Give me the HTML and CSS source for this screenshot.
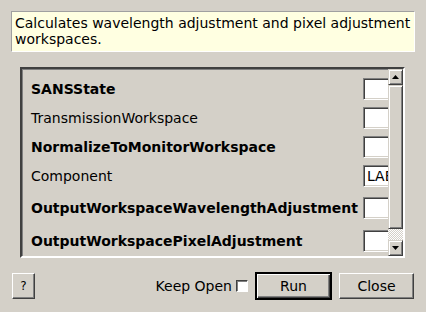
FILE: index.html
```html
<!DOCTYPE html>
<html lang="en">
<head>
  <meta charset="utf-8">
  <title>SANSCalculateTransmission</title>
  <link rel="stylesheet" href="styles.css">
</head>
<body>
  <div class="dialog">
    <div class="desc">Calculates wavelength adjustment and pixel adjustment workspaces.</div>

    <div class="panel">
      <div class="rows">
        <div class="row">
          <span class="label bold">SANSState</span>
          <input class="field" type="text">
        </div>
        <div class="row">
          <span class="label">TransmissionWorkspace</span>
          <input class="field" type="text">
        </div>
        <div class="row">
          <span class="label bold">NormalizeToMonitorWorkspace</span>
          <input class="field" type="text">
        </div>
        <div class="row row-30">
          <span class="label">Component</span>
          <input class="field" type="text" value="LAB">
        </div>
        <div class="row row-33">
          <span class="label bold">OutputWorkspaceWavelengthAdjustment</span>
          <input class="field" type="text">
        </div>
        <div class="row row-34">
          <span class="label bold">OutputWorkspacePixelAdjustment</span>
          <input class="field" type="text">
        </div>
      </div>

      <div class="scrollbar">
        <div class="sb-btn">
          <svg width="7" height="4" viewBox="0 0 7 4"><path d="M0 4h7L3.5 0z" fill="#000"/></svg>
        </div>
        <div class="sb-thumb"></div>
        <div class="sb-track"></div>
        <div class="sb-btn">
          <svg width="7" height="4" viewBox="0 0 7 4"><path d="M0 0h7L3.5 4z" fill="#000"/></svg>
        </div>
      </div>
    </div>

    <div class="actions">
      <button class="btn btn-help" type="button">?</button>
      <label class="keep-open">Keep Open <span class="check"></span></label>
      <button class="btn btn-default" type="button">Run</button>
      <button class="btn" type="button">Close</button>
    </div>
  </div>
</body>
</html>
```

FILE: styles.css
```css
body {
  margin: 0;
  background-color: #d4d0c8;
  color: #000;
  font-family: "DejaVu Sans", sans-serif;
  font-size: 14px;
}

.dialog {
  display: flex;
  flex-direction: column;
  padding: 11px 11px 0 11px;
}

.desc {
  background-color: #ffffe1;
  border: 1px solid;
  border-color: #a0a0a0 #ffffff #ffffff #a0a0a0;
  padding: 3px 3px 4px 3px;
  line-height: 16px;
}

.panel {
  display: flex;
  width: 381px;
  height: 187px;
  margin: 15px 0 0 9px;
  border: 2px solid;
  border-color: #404040 #ffffff #ffffff #404040;
  box-shadow: inset 1px 1px #808080;
}

.rows {
  flex: 1;
  overflow: hidden;
  padding: 5px 0 0 9px;
}

.row {
  display: flex;
  align-items: center;
  height: 29px;
}

.row-30 { height: 30px; }
.row-33 { height: 33px; }
.row-34 { height: 34px; }

.label {
  flex: 1;
  white-space: nowrap;
}

.bold {
  font-weight: bold;
}

.field {
  flex: none;
  box-sizing: border-box;
  width: 40px;
  height: 22px;
  margin: 0 -15px 0 0;
  padding: 0 3px;
  font: inherit;
  color: #000;
  background-color: #fff;
  border: 1px solid;
  border-color: #808080 #ffffff #ffffff #808080;
  box-shadow: inset 1px 1px #404040, inset -1px -1px #d4d0c8;
  outline: none;
}

.scrollbar {
  display: flex;
  flex-direction: column;
  width: 15px;
}

.sb-btn,
.sb-thumb {
  box-sizing: border-box;
  background-color: #d4d0c8;
  border: 1px solid;
  border-color: #d4d0c8 #404040 #404040 #d4d0c8;
  box-shadow: inset 1px 1px #ffffff, inset -1px -1px #808080;
}

.sb-btn {
  display: flex;
  align-items: center;
  justify-content: center;
  height: 16px;
}

.sb-thumb {
  height: 144px;
}

.sb-track {
  flex: 1;
  background: repeating-conic-gradient(#ffffff 0 25%, #d4d0c8 0 50%) 0 0 / 2px 2px;
}

.actions {
  display: flex;
  align-items: center;
  margin-top: 14px;
  padding-right: 1px;
}

.btn {
  box-sizing: border-box;
  height: 26px;
  width: 75px;
  font: inherit;
  color: #000;
  background-color: #d4d0c8;
  border: 1px solid;
  border-color: #ffffff #404040 #404040 #ffffff;
  box-shadow: inset -1px -1px #808080;
  padding: 0;
}

.btn-help {
  width: 23px;
  margin-left: 1px;
  font-size: 12px;
}

.btn-default {
  width: 77px;
  height: 28px;
  margin-right: 7px;
  border: 2px solid;
  border-color: #000;
  box-shadow: inset 1px 1px #ffffff, inset -1px -1px #404040, inset -2px -2px #808080;
}

.keep-open {
  display: flex;
  align-items: center;
  margin-left: auto;
  margin-right: 7px;
}

.check {
  box-sizing: border-box;
  width: 12px;
  height: 12px;
  margin-left: 4px;
  background-color: #fff;
  border: 1px solid;
  border-color: #404040 #ffffff #ffffff #404040;
  box-shadow: inset 1px 1px #808080;
}
```
